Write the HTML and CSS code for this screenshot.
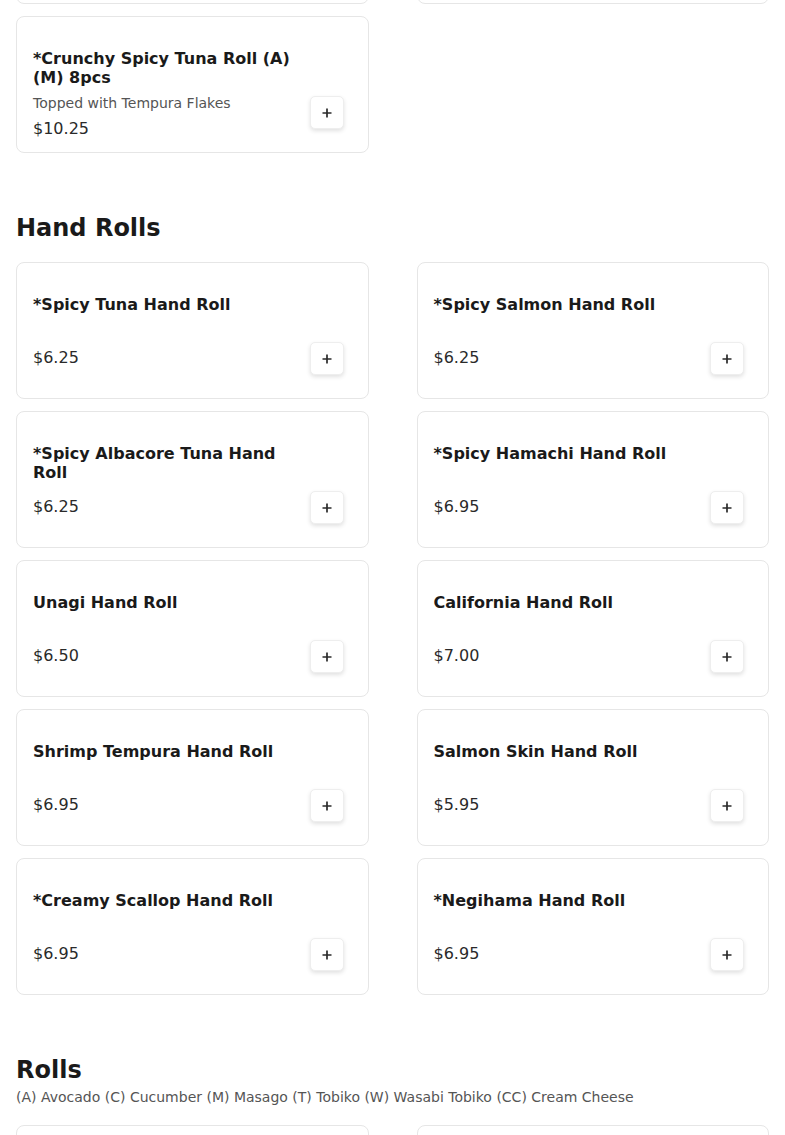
FILE: index.html
```html
<!DOCTYPE html>
<html lang="en">
<head>
<meta charset="utf-8">
<title>Menu</title>
<link rel="stylesheet" href="styles.css">
</head>
<body>
<main class="menu">
  <section class="section section-top">
    <div class="grid grid-top">
      <div class="card"></div>
      <div class="card"></div>
      <div class="card">
        <div class="info">
          <div class="title">*Crunchy Spicy Tuna Roll (A) (M) 8pcs</div>
          <div class="desc">Topped with Tempura Flakes</div>
          <div class="price">$10.25</div>
        </div>
        <div class="action"><button class="add" type="button" aria-label="Add"><svg class="plus" viewBox="0 0 10 10" width="10" height="10"><path d="M5 0.5V9.5M0.5 5H9.5"/></svg></button></div>
      </div>
    </div>
  </section>

  <section class="section">
    <header class="section-head">
      <h2 class="section-title">Hand Rolls</h2>
    </header>
    <div class="grid">
      <div class="card">
        <div class="info"><div class="title">*Spicy Tuna Hand Roll</div><div class="price">$6.25</div></div>
        <div class="action"><button class="add" type="button" aria-label="Add"><svg class="plus" viewBox="0 0 10 10" width="10" height="10"><path d="M5 0.5V9.5M0.5 5H9.5"/></svg></button></div>
      </div>
      <div class="card">
        <div class="info"><div class="title">*Spicy Salmon Hand Roll</div><div class="price">$6.25</div></div>
        <div class="action"><button class="add" type="button" aria-label="Add"><svg class="plus" viewBox="0 0 10 10" width="10" height="10"><path d="M5 0.5V9.5M0.5 5H9.5"/></svg></button></div>
      </div>
      <div class="card">
        <div class="info"><div class="title">*Spicy Albacore Tuna Hand Roll</div><div class="price">$6.25</div></div>
        <div class="action"><button class="add" type="button" aria-label="Add"><svg class="plus" viewBox="0 0 10 10" width="10" height="10"><path d="M5 0.5V9.5M0.5 5H9.5"/></svg></button></div>
      </div>
      <div class="card">
        <div class="info"><div class="title">*Spicy Hamachi Hand Roll</div><div class="price">$6.95</div></div>
        <div class="action"><button class="add" type="button" aria-label="Add"><svg class="plus" viewBox="0 0 10 10" width="10" height="10"><path d="M5 0.5V9.5M0.5 5H9.5"/></svg></button></div>
      </div>
      <div class="card">
        <div class="info"><div class="title">Unagi Hand Roll</div><div class="price">$6.50</div></div>
        <div class="action"><button class="add" type="button" aria-label="Add"><svg class="plus" viewBox="0 0 10 10" width="10" height="10"><path d="M5 0.5V9.5M0.5 5H9.5"/></svg></button></div>
      </div>
      <div class="card">
        <div class="info"><div class="title">California Hand Roll</div><div class="price">$7.00</div></div>
        <div class="action"><button class="add" type="button" aria-label="Add"><svg class="plus" viewBox="0 0 10 10" width="10" height="10"><path d="M5 0.5V9.5M0.5 5H9.5"/></svg></button></div>
      </div>
      <div class="card">
        <div class="info"><div class="title">Shrimp Tempura Hand Roll</div><div class="price">$6.95</div></div>
        <div class="action"><button class="add" type="button" aria-label="Add"><svg class="plus" viewBox="0 0 10 10" width="10" height="10"><path d="M5 0.5V9.5M0.5 5H9.5"/></svg></button></div>
      </div>
      <div class="card">
        <div class="info"><div class="title">Salmon Skin Hand Roll</div><div class="price">$5.95</div></div>
        <div class="action"><button class="add" type="button" aria-label="Add"><svg class="plus" viewBox="0 0 10 10" width="10" height="10"><path d="M5 0.5V9.5M0.5 5H9.5"/></svg></button></div>
      </div>
      <div class="card">
        <div class="info"><div class="title">*Creamy Scallop Hand Roll</div><div class="price">$6.95</div></div>
        <div class="action"><button class="add" type="button" aria-label="Add"><svg class="plus" viewBox="0 0 10 10" width="10" height="10"><path d="M5 0.5V9.5M0.5 5H9.5"/></svg></button></div>
      </div>
      <div class="card">
        <div class="info"><div class="title">*Negihama Hand Roll</div><div class="price">$6.95</div></div>
        <div class="action"><button class="add" type="button" aria-label="Add"><svg class="plus" viewBox="0 0 10 10" width="10" height="10"><path d="M5 0.5V9.5M0.5 5H9.5"/></svg></button></div>
      </div>
    </div>
  </section>

  <section class="section">
    <header class="section-head">
      <h2 class="section-title">Rolls</h2>
      <p class="section-sub">(A) Avocado (C) Cucumber (M) Masago (T) Tobiko (W) Wasabi Tobiko (CC) Cream Cheese</p>
    </header>
    <div class="grid">
      <div class="card"></div>
      <div class="card"></div>
    </div>
  </section>
</main>
</body>
</html>
```

FILE: styles.css
```css
* {
  box-sizing: border-box;
}

html, body {
  margin: 0;
  padding: 0;
  background: #ffffff;
}

body {
  font-family: "DejaVu Sans", "Liberation Sans", sans-serif;
  color: #1a1a1a;
  overflow: hidden;
}

.menu {
  padding: 0 16px;
}

.section {
  margin-top: 59px;
}

.section-top {
  margin-top: 0;
}

.grid {
  display: grid;
  grid-template-columns: 1fr 1fr;
  column-gap: 48px;
  row-gap: 12px;
}

.grid-top {
  margin-top: -133px;
}

.section-head {
  margin-bottom: 18px;
}

.section-title {
  margin: 0;
  font-size: 24px;
  line-height: 32px;
  font-weight: 700;
  color: #1a1a1a;
}

.section-sub {
  margin: 1px 0 1px;
  font-size: 14px;
  line-height: 20px;
  color: #555555;
}

.card {
  display: flex;
  height: 137px;
  padding: 16px;
  border: 1px solid #e6e6e6;
  border-radius: 8px;
  background: #ffffff;
}

.info {
  flex: 1;
  min-width: 0;
  padding-top: 16px;
}

.title {
  min-height: 38px;
  font-size: 16px;
  line-height: 19px;
  font-weight: 700;
  color: #1a1a1a;
}

.desc {
  margin-top: 6px;
  font-size: 14px;
  line-height: 20px;
  color: #555555;
}

.price {
  margin-top: 13px;
  font-size: 16px;
  line-height: 24px;
  color: #2a2a2a;
}

.desc + .price {
  margin-top: 4px;
}

.action {
  display: flex;
  flex-direction: column;
  justify-content: flex-end;
  width: 34px;
  margin-right: 8px;
  padding-bottom: 7px;
}

.add {
  display: flex;
  align-items: center;
  justify-content: center;
  width: 34px;
  height: 33px;
  padding: 0;
  border: 1px solid #eeeeee;
  border-radius: 5px;
  background: #ffffff;
  box-shadow: 0 2px 4px rgba(0, 0, 0, 0.12);
  cursor: pointer;
}

.plus {
  display: block;
  fill: none;
  stroke: #2a2a2a;
  stroke-width: 1.7;
}
```
